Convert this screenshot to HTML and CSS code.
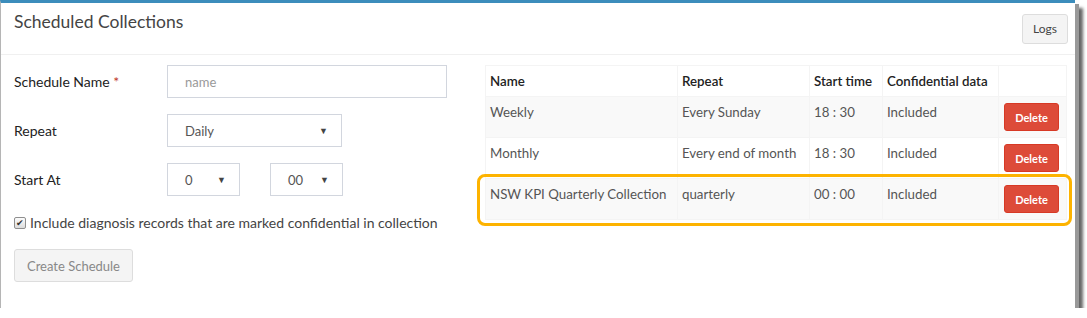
FILE: index.html
```html
<!DOCTYPE html>
<html lang="en">
<head>
    <meta charset="UTF-8">
    <title>Scheduled Collections</title>
    <link rel="stylesheet" href="styles.css">
</head>
<body>
    <div class="box">
        <div class="box-header">
            <h3>Scheduled Collections</h3>
            <button type="button" class="btn btn-default">Logs</button>
        </div>
        <div class="box-body">
            <form class="schedule-form">
                <div class="form-row">
                    <label>Schedule Name <span class="req">*</span></label>
                    <input type="text" class="control wide" placeholder="name">
                </div>
                <div class="form-row">
                    <label>Repeat</label>
                    <div class="control select mid">Daily<span class="caret">&#9660;</span></div>
                </div>
                <div class="form-row">
                    <label>Start At</label>
                    <div class="control select small">0<span class="caret">&#9660;</span></div>
                    <div class="control select small">00<span class="caret">&#9660;</span></div>
                </div>
                <label class="check">
                    <span class="checkbox">&#10004;</span>
                    Include diagnosis records that are marked confidential in collection
                </label>
                <button type="button" class="btn btn-default disabled">Create Schedule</button>
            </form>

            <table class="schedules">
                <thead>
                    <tr>
                        <th class="c-name">Name</th>
                        <th class="c-repeat">Repeat</th>
                        <th class="c-time">Start time</th>
                        <th class="c-conf">Confidential data</th>
                        <th class="c-act"></th>
                    </tr>
                </thead>
                <tbody>
                    <tr>
                        <td>Weekly</td>
                        <td>Every Sunday</td>
                        <td>18 : 30</td>
                        <td>Included</td>
                        <td><button type="button" class="btn btn-danger">Delete</button></td>
                    </tr>
                    <tr>
                        <td>Monthly</td>
                        <td>Every end of month</td>
                        <td>18 : 30</td>
                        <td>Included</td>
                        <td><button type="button" class="btn btn-danger">Delete</button></td>
                    </tr>
                    <tr class="highlight">
                        <td>NSW KPI Quarterly Collection</td>
                        <td>quarterly</td>
                        <td>00 : 00</td>
                        <td>Included</td>
                        <td><button type="button" class="btn btn-danger">Delete</button></td>
                    </tr>
                </tbody>
            </table>
        </div>
    </div>
</body>
</html>
```

FILE: styles.css
```css
body {
    margin: 0;
    background: #fff;
    font-family: Lato, "Open Sans", sans-serif;
    font-size: 13px;
    color: #333;
}

.box {
    width: 1074px;
    height: 305px;
    border-top: 3px solid #3c8dbc;
    border-left: 1px solid #b5b5b5;
    background: #fff;
    box-shadow: 4px 4px 0 #999, 8px 8px 3px #666;
}

.box-header {
    display: flex;
    justify-content: space-between;
    align-items: center;
    height: 51px;
    padding: 0 7px 0 13px;
    border-bottom: 1px solid #f0f0f0;
}

.box-header h3 {
    margin: 0 0 14px;
    font-size: 17.5px;
    font-weight: normal;
    color: #444;
}

.btn {
    font-family: inherit;
    font-size: 12px;
    border-radius: 3px;
    cursor: pointer;
}

.btn-default {
    height: 30px;
    padding: 0 10px;
    background: #f4f4f4;
    border: 1px solid #ddd;
    color: #444;
}

.box-body {
    display: flex;
    align-items: flex-start;
    padding: 10px 8px 0 13px;
}

.schedule-form {
    width: 433px;
    margin-right: 38px;
}

.form-row {
    display: flex;
    align-items: center;
    margin-bottom: 16px;
}

.form-row label {
    width: 153px;
    font-size: 14px;
    color: #222;
}

.req {
    color: #c0392b;
}

.control {
    box-sizing: border-box;
    height: 33px;
    border: 1px solid #d2d6de;
    background: #fff;
    font-family: inherit;
    font-size: 13px;
    color: #555;
    padding: 0 13px 0 17px;
}

.wide {
    width: 280px;
}

.wide::placeholder {
    color: #999;
}

.select {
    display: flex;
    align-items: center;
    justify-content: space-between;
}

.mid {
    width: 175px;
}

.small {
    width: 73px;
}

.small + .small {
    margin-left: 30px;
}

.caret {
    font-size: 9px;
    color: #444;
}

.check {
    display: flex;
    align-items: center;
    gap: 4px;
    margin: 18px 0 18px;
    font-size: 14px;
    color: #444;
}

.checkbox {
    box-sizing: border-box;
    width: 12px;
    height: 12px;
    border: 1px solid #8f8f8f;
    border-radius: 2px;
    background: linear-gradient(#fcfcfc, #dcdcdc);
    font-size: 9px;
    line-height: 10px;
    text-align: center;
    color: #333;
}

.disabled {
    height: 33px;
    padding: 0 12px;
    font-size: 13px;
    color: #888;
    background: #f4f4f4;
}

.schedules {
    width: 582px;
    table-layout: fixed;
    border-collapse: collapse;
    border: 1px solid #f4f4f4;
    font-size: 13.3px;
}

.schedules th,
.schedules td {
    border: 1px solid #f4f4f4;
    padding: 7px 4px;
    text-align: left;
    vertical-align: top;
    white-space: nowrap;
}

.schedules thead tr {
    height: 31px;
}

.schedules tbody tr {
    height: 41px;
}

.schedules th {
    font-weight: 600;
    color: #222;
}

.schedules td {
    color: #555;
}

.schedules tbody tr:nth-child(odd) {
    background: #f9f9f9;
}

.c-name { width: 183px; }
.c-repeat { width: 123px; }
.c-time { width: 64px; }
.c-conf { width: 107px; }

.schedules td:last-child {
    padding: 6px 5px;
}

.btn-danger {
    height: 28px;
    width: 55px;
    padding: 0;
    font-size: 11px;
    font-weight: bold;
    color: #fff;
    background: #dd4b39;
    border: 1px solid #d73925;
}

.highlight td {
    position: relative;
}

.highlight td:first-child::before {
    content: "";
    position: absolute;
    box-sizing: border-box;
    left: -9px;
    top: -5px;
    width: 595px;
    height: 52px;
    border: 3px solid #fdb300;
    border-radius: 8px;
    pointer-events: none;
}
```
